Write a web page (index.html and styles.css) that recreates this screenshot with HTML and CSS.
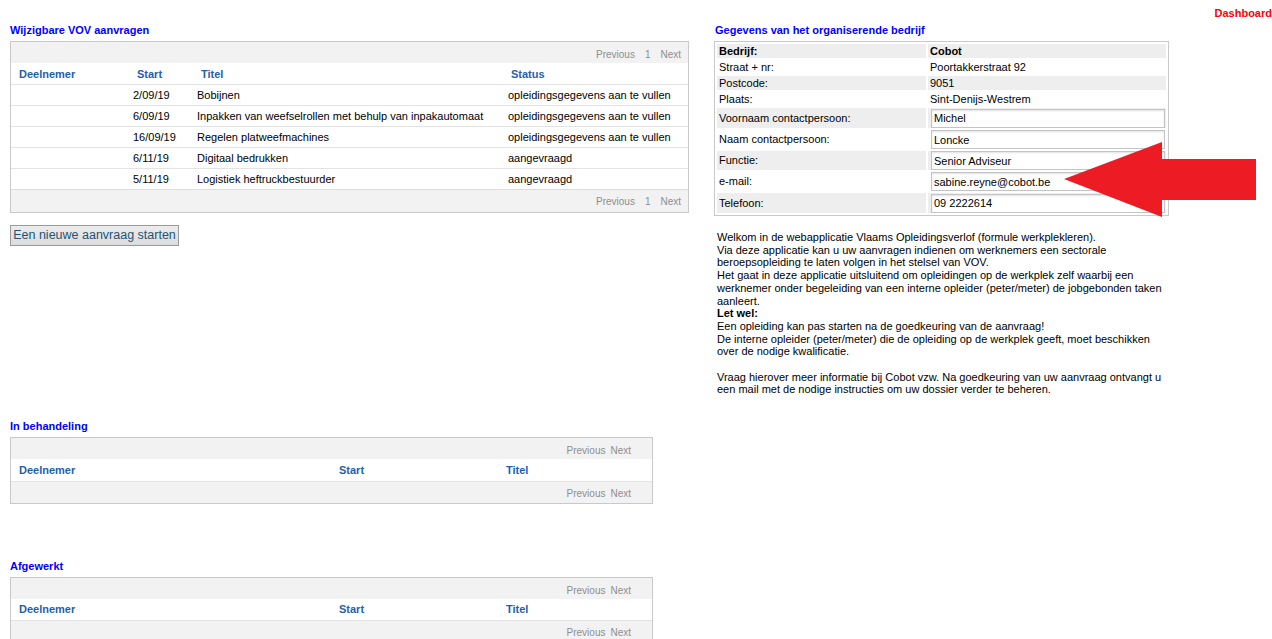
FILE: index.html
```html
<!DOCTYPE html>
<html lang="nl">
<head>
<meta charset="utf-8">
<title>VOV aanvragen</title>
<link rel="stylesheet" href="styles.css">
</head>
<body>
<div class="topbar"><a class="dash-link" href="#">Dashboard</a></div>

<div class="main">
  <div class="col-left">
    <h2 class="sec-title">Wijzigbare VOV aanvragen</h2>
    <div class="dt-box dt-wide">
      <div class="pager pager-top"><span>Previous</span><span>1</span><span>Next</span></div>
      <table class="dt">
        <colgroup><col class="c1"><col class="c2"><col class="c3"><col class="c4"></colgroup>
        <thead><tr><th>Deelnemer</th><th>Start</th><th>Titel</th><th class="th-status">Status</th></tr></thead>
        <tbody>
          <tr><td></td><td>2/09/19</td><td>Bobijnen</td><td>opleidingsgegevens aan te vullen</td></tr>
          <tr><td></td><td>6/09/19</td><td>Inpakken van weefselrollen met behulp van inpakautomaat</td><td>opleidingsgegevens aan te vullen</td></tr>
          <tr><td></td><td>16/09/19</td><td>Regelen platweefmachines</td><td>opleidingsgegevens aan te vullen</td></tr>
          <tr><td></td><td>6/11/19</td><td>Digitaal bedrukken</td><td>aangevraagd</td></tr>
          <tr><td></td><td>5/11/19</td><td>Logistiek heftruckbestuurder</td><td>aangevraagd</td></tr>
        </tbody>
      </table>
      <div class="pager pager-bottom"><span>Previous</span><span>1</span><span>Next</span></div>
    </div>
    <button class="btn" type="button">Een nieuwe aanvraag starten</button>
  </div>

  <div class="col-right">
    <h2 class="sec-title">Gegevens van het organiserende bedrijf</h2>
    <table class="company">
      <tr class="odd txt"><th>Bedrijf:</th><th>Cobot</th></tr>
      <tr class="txt"><td>Straat + nr:</td><td>Poortakkerstraat 92</td></tr>
      <tr class="odd txt"><td>Postcode:</td><td>9051</td></tr>
      <tr class="txt"><td>Plaats:</td><td>Sint-Denijs-Westrem</td></tr>
      <tr class="odd tall"><td>Voornaam contactpersoon:</td><td><input class="field" type="text" value="Michel"></td></tr>
      <tr><td>Naam contactpersoon:</td><td><input class="field" type="text" value="Loncke"></td></tr>
      <tr class="odd"><td>Functie:</td><td><input class="field" type="text" value="Senior Adviseur"></td></tr>
      <tr><td>e-mail:</td><td><input class="field" type="text" value="sabine.reyne@cobot.be"></td></tr>
      <tr class="odd tall"><td>Telefoon:</td><td><input class="field" type="text" value="09 2222614"></td></tr>
    </table>
    <p class="intro">
      Welkom in de webapplicatie Vlaams Opleidingsverlof (formule werkplekleren).<br>
      Via deze applicatie kan u uw aanvragen indienen om werknemers een sectorale beroepsopleiding te laten volgen in het stelsel van VOV.<br>
      Het gaat in deze applicatie uitsluitend om opleidingen op de werkplek zelf waarbij een werknemer onder begeleiding van een interne opleider (peter/meter) de jobgebonden taken aanleert.<br>
      <b>Let wel:</b><br>
      Een opleiding kan pas starten na de goedkeuring van de aanvraag!<br>
      De interne opleider (peter/meter) die de opleiding op de werkplek geeft, moet beschikken over de nodige kwalificatie.<br>
      <br>
      Vraag hierover meer informatie bij Cobot vzw. Na goedkeuring van uw aanvraag ontvangt u een mail met de nodige instructies om uw dossier verder te beheren.
    </p>
  </div>
</div>

<section class="sub sub-first">
  <h2 class="sec-title">In behandeling</h2>
  <div class="dt-box dt-narrow">
    <div class="pager pager-wide pager-top"><span>Previous</span><span>Next</span></div>
    <table class="dt dt-empty">
      <colgroup><col class="n1"><col class="n2"><col class="n3"><col></colgroup>
      <thead><tr><th>Deelnemer</th><th>Start</th><th>Titel</th><th></th></tr></thead>
    </table>
    <div class="pager pager-wide"><span>Previous</span><span>Next</span></div>
  </div>
</section>

<section class="sub sub-second">
  <h2 class="sec-title">Afgewerkt</h2>
  <div class="dt-box dt-narrow">
    <div class="pager pager-wide pager-top"><span>Previous</span><span>Next</span></div>
    <table class="dt dt-empty">
      <colgroup><col class="n1"><col class="n2"><col class="n3"><col></colgroup>
      <thead><tr><th>Deelnemer</th><th>Start</th><th>Titel</th><th></th></tr></thead>
    </table>
    <div class="pager pager-wide"><span>Previous</span><span>Next</span></div>
  </div>
</section>

<svg class="pointer" width="200" height="82" viewBox="0 0 200 82" aria-hidden="true">
  <polygon points="4,41 102,4 102,21 196,21 196,62 102,62 102,79" fill="#ed1c24"/>
</svg>
</body>
</html>
```

FILE: styles.css
```css
html, body {
  margin: 0;
  padding: 0;
  background: #fff;
}

body {
  font-family: "Liberation Sans", Arial, sans-serif;
  font-size: 11px;
  color: #000;
  position: relative;
  min-height: 639px;
  overflow: hidden;
}

/* top navigation */
.topbar {
  height: 20px;
  padding-top: 6px;
  box-sizing: border-box;
  text-align: right;
  line-height: 14px;
}

.dash-link {
  color: #ff0000;
  font-weight: bold;
  font-size: 11px;
  text-decoration: none;
}

/* two column area */
.main {
  display: flex;
  gap: 25px;
  padding-left: 10px;
  margin-top: 4px;
}

.col-left {
  width: 679px;
}

.col-right {
  width: 455px;
}

.sec-title {
  margin: 0 0 4px 0;
  font-size: 11px;
  line-height: 13px;
  font-weight: bold;
  color: #0000ff;
}

.col-right .sec-title {
  padding-left: 1px;
}

/* data tables */
.dt-box {
  border: 1px solid #c9c9c9;
  box-sizing: border-box;
  background: #f2f2f2;
}

.dt-wide {
  width: 679px;
}

.dt-narrow {
  width: 643px;
}

.pager {
  height: 21px;
  box-sizing: border-box;
  padding-top: 2px;
  display: flex;
  justify-content: flex-end;
  align-items: center;
  gap: 10px;
  padding-right: 7px;
  color: #8e8e8e;
  font-size: 10px;
  background: #f2f2f2;
}

.pager-top {
  padding-top: 4px;
}

.pager-bottom {
  height: 22px;
}

.pager-wide {
  gap: 5px;
  padding-right: 21px;
}

.dt {
  width: 100%;
  border-collapse: collapse;
  table-layout: fixed;
  background: #fff;
}

.dt col.c1 { width: 118px; }
.dt col.c2 { width: 64px; }
.dt col.c3 { width: 311px; }

.dt col.n1 { width: 320px; }
.dt col.n2 { width: 167px; }
.dt col.n3 { width: 154px; }

.dt th {
  height: 21px;
  padding: 2px 0 0 8px;
  text-align: left;
  color: #1f5fad;
  font-weight: bold;
  border-bottom: 1px solid #e3e3e3;
  box-sizing: border-box;
}

.dt th.th-status {
  padding-left: 7px;
}

.dt-empty th {
  height: 22px;
  padding-top: 0;
}

.dt td {
  height: 21px;
  padding: 0 0 0 4px;
  white-space: nowrap;
  border-bottom: 1px solid #e3e3e3;
  box-sizing: border-box;
}

.dt tbody tr:last-child td {
  border-bottom: 1px solid #dcdcdc;
}

.btn {
  display: block;
  margin-top: 12px;
  width: 169px;
  height: 21px;
  padding: 0;
  white-space: nowrap;
  font-family: "Liberation Sans", Arial, sans-serif;
  font-size: 12.5px;
  color: #1e5477;
  background: linear-gradient(#ececec, #dcdcdc);
  border: 1px solid #9a9a9a;
  border-radius: 0;
  text-align: center;
}

/* company details */
.company {
  width: 455px;
  border: 1px solid #c9c9c9;
  border-spacing: 2px;
  font-size: 11px;
  table-layout: fixed;
}

.company td, .company th {
  padding: 0 2px;
  text-align: left;
  vertical-align: middle;
  height: 19px;
  line-height: 13px;
}

.company tr.txt td, .company tr.txt th {
  height: 14px;
}

.company tr.tall td {
  height: 20px;
}

.company th {
  font-weight: bold;
}

.company td:first-child, .company th:first-child {
  width: 205px;
}

.company tr.odd td, .company tr.odd th {
  background: #eeeeee;
}

.field {
  display: block;
  box-sizing: border-box;
  width: 234px;
  height: 19px;
  margin: 0 0 0 1px;
  padding: 0 2px;
  font-family: "Liberation Sans", Arial, sans-serif;
  font-size: 11px;
  color: #000;
  border: 1px solid #c4c4c4;
  box-shadow: inset 0 1px 2px rgba(0, 0, 0, 0.12);
  background: #fff;
}

.intro {
  margin: 15px 0 0 3px;
  width: 452px;
  font-size: 11px;
  line-height: 12.7px;
}

/* lower sections */
.sub {
  padding-left: 10px;
}

.sub-first {
  margin-top: 24px;
}

.sub-second {
  margin-top: 56px;
}

/* callout arrow drawn over the form */
.pointer {
  position: absolute;
  left: 1060px;
  top: 138px;
}
```
